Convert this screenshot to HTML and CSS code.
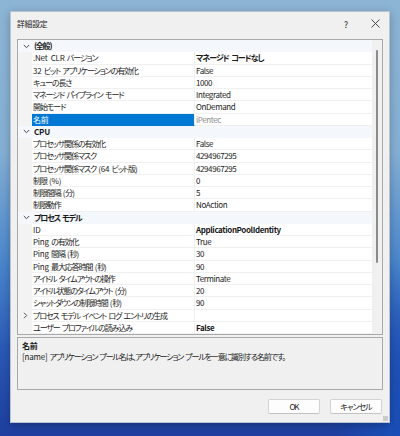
FILE: index.html
```html
<!DOCTYPE html>
<html lang="ja">
<head>
<meta charset="utf-8">
<title>詳細設定</title>
<link rel="stylesheet" href="styles.css">
</head>
<body>
<div class="desktop">
  <div class="window">
    <div class="titlebar">
      <span class="title">詳細設定</span>
      <span class="help">?</span>
      <span class="close"><svg width="9" height="9" viewBox="0 0 9 9"><path d="M0.5 0.5 L8.5 8.5 M8.5 0.5 L0.5 8.5" stroke="#333" stroke-width="0.9" fill="none"/></svg></span>
    </div>
    <div class="grid">
      <div class="rows">
        <div class="row cat"><span class="margin"><svg class="chev" width="7" height="5" viewBox="0 0 7 5"><path d="M0.8 1 L3.5 3.7 L6.2 1" stroke="#444" stroke-width="1" fill="none"/></svg></span><span class="catname">(全般)</span></div>
        <div class="row"><span class="margin"></span><span class="name"><span class="en">.Net CLR</span> バージョン</span><span class="value bold ja">マネージド コードなし</span></div>
        <div class="row"><span class="margin"></span><span class="name"><span class="en">32</span> ビット アプリケーションの有効化</span><span class="value">False</span></div>
        <div class="row"><span class="margin"></span><span class="name">キューの長さ</span><span class="value">1000</span></div>
        <div class="row"><span class="margin"></span><span class="name">マネージド パイプライン モード</span><span class="value">Integrated</span></div>
        <div class="row"><span class="margin"></span><span class="name">開始モード</span><span class="value">OnDemand</span></div>
        <div class="row"><span class="margin"></span><span class="name selected">名前</span><span class="value readonly">iPentec</span></div>
        <div class="row cat"><span class="margin"><svg class="chev" width="7" height="5" viewBox="0 0 7 5"><path d="M0.8 1 L3.5 3.7 L6.2 1" stroke="#444" stroke-width="1" fill="none"/></svg></span><span class="catname en">CPU</span></div>
        <div class="row"><span class="margin"></span><span class="name">プロセッサ関係の有効化</span><span class="value">False</span></div>
        <div class="row"><span class="margin"></span><span class="name">プロセッサ関係マスク</span><span class="value">4294967295</span></div>
        <div class="row"><span class="margin"></span><span class="name">プロセッサ関係マスク <span class="en">(64</span> ビット版)</span><span class="value">4294967295</span></div>
        <div class="row"><span class="margin"></span><span class="name">制限 <span class="en">(%)</span></span><span class="value">0</span></div>
        <div class="row"><span class="margin"></span><span class="name">制限間隔 <span class="en">(</span>分<span class="en">)</span></span><span class="value">5</span></div>
        <div class="row"><span class="margin"></span><span class="name">制限動作</span><span class="value">NoAction</span></div>
        <div class="row cat"><span class="margin"><svg class="chev" width="7" height="5" viewBox="0 0 7 5"><path d="M0.8 1 L3.5 3.7 L6.2 1" stroke="#444" stroke-width="1" fill="none"/></svg></span><span class="catname">プロセス モデル</span></div>
        <div class="row"><span class="margin"></span><span class="name"><span class="en">ID</span></span><span class="value bold">ApplicationPoolIdentity</span></div>
        <div class="row"><span class="margin"></span><span class="name"><span class="en">Ping</span> の有効化</span><span class="value">True</span></div>
        <div class="row"><span class="margin"></span><span class="name"><span class="en">Ping</span> 間隔 <span class="en">(</span>秒<span class="en">)</span></span><span class="value">30</span></div>
        <div class="row"><span class="margin"></span><span class="name"><span class="en">Ping</span> 最大応答時間 <span class="en">(</span>秒<span class="en">)</span></span><span class="value">90</span></div>
        <div class="row"><span class="margin"></span><span class="name">アイドル タイムアウトの操作</span><span class="value">Terminate</span></div>
        <div class="row"><span class="margin"></span><span class="name">アイドル状態のタイムアウト <span class="en">(</span>分<span class="en">)</span></span><span class="value">20</span></div>
        <div class="row"><span class="margin"></span><span class="name">シャットダウンの制限時間 <span class="en">(</span>秒<span class="en">)</span></span><span class="value">90</span></div>
        <div class="row"><span class="margin"><svg class="chev" width="5" height="7" viewBox="0 0 5 7"><path d="M1 0.8 L3.7 3.5 L1 6.2" stroke="#555" stroke-width="1" fill="none"/></svg></span><span class="name">プロセス モデル イベント ログ エントリの生成</span><span class="value"></span></div>
        <div class="row"><span class="margin"></span><span class="name">ユーザー プロファイルの読み込み</span><span class="value bold">False</span></div>
      </div>
      <div class="scroll"><div class="thumb"></div></div>
    </div>
    <div class="desc">
      <div class="desc-title">名前</div>
      <div class="desc-text"><span class="en">[name]</span> アプリケーション プール名は、アプリケーション プールを一意に識別する名前です。</div>
    </div>
    <div class="buttons">
      <button class="btn">OK</button>
      <button class="btn">キャンセル</button>
    </div>
    <div class="grip"></div>
  </div>
</div>
</body>
</html>
```
FILE: styles.css
```css
html, body {
  margin: 0;
  padding: 0;
}
body {
  width: 400px;
  height: 436px;
  overflow: hidden;
  font-family: "Noto Sans CJK JP", "Noto Sans", sans-serif;
  font-size: 8px;
  font-feature-settings: "palt" 1;
  color: #1b1b1b;
}
.desktop {
  width: 400px;
  height: 436px;
  padding-top: 11px;
  padding-left: 10px;
  box-sizing: border-box;
  background:
    radial-gradient(ellipse 60px 160px at 395px 420px, #1a4fb8 0%, rgba(26,79,184,0) 100%),
    linear-gradient(180deg, #8cb4d4 0%, #84afd4 35%, #4a86cc 60%, #2a59b6 80%, #1d3e9e 100%);
}
.window {
  width: 380px;
  height: 412px;
  box-sizing: border-box;
  background: #f0f0f0;
  border: 1px solid #b9c4cf;
  box-shadow: 0 2px 8px rgba(0,0,0,0.25);
  display: flex;
  flex-direction: column;
  position: relative;
}
.titlebar {
  height: 21px;
  display: flex;
  align-items: center;
  padding-left: 6px;
  padding-top: 1px;
}
.title {
  flex: 1;
  font-size: 7.8px;
  letter-spacing: -0.2px;
  color: #1b1b1b;
}
.help {
  font-size: 8.5px;
  width: 10px;
  text-align: center;
  margin-right: 20px;
}
.close {
  display: flex;
  width: 9px;
  margin-right: 9px;
}
.grid {
  margin: 5px 6px 0 6px;
  height: 296px;
  box-sizing: border-box;
  border: 1px solid #a9a9a9;
  background: #f0f0f0;
  display: flex;
  overflow: hidden;
}
.rows {
  width: 354px;
  display: flex;
  flex-direction: column;
}
.row {
  height: 12.25px;
  flex: none;
  display: flex;
  line-height: 12px;
  white-space: nowrap;
}
.margin {
  width: 14px;
  flex: none;
  display: flex;
  align-items: center;
  justify-content: center;
  background: #f3f3f3;
}
.cat {
  background: #f4f7fb;
}
.cat .margin {
  background: #f4f7fb;
  padding-left: 1px;
}
.catname {
  font-weight: bold;
  padding-left: 1px;
  letter-spacing: -1.2px;
  word-spacing: 1.5px;
}
.name {
  width: 163px;
  flex: none;
  padding-left: 1px;
  box-sizing: border-box;
  letter-spacing: -1.1px;
  word-spacing: 1.5px;
  background: #fff;
  border-bottom: 1px solid #f0f0f0;
  border-right: 1px solid #f0f0f0;
  overflow: hidden;
}
.en {
  letter-spacing: -0.2px;
}
.catname.en {
  letter-spacing: -0.2px;
}
.name.selected {
  background: #0078d4;
  color: #fff;
  letter-spacing: -0.3px;
  border-bottom-color: #0078d4;
}
.value {
  flex: 1;
  padding-left: 1px;
  letter-spacing: -0.4px;
  background: #fff;
  border-bottom: 1px solid #f0f0f0;
  overflow: hidden;
}
.value.ja {
  letter-spacing: -1px;
  word-spacing: 1.5px;
}
.bold {
  font-weight: bold;
}
.readonly {
  color: #8a8a8a;
}
.scroll {
  flex: 1;
  display: flex;
  justify-content: center;
  padding-top: 10px;
}
.thumb {
  width: 2px;
  height: 213px;
  border-radius: 1px;
  background: #8b8b8b;
}
.desc {
  margin: 2px 6px 0 6px;
  height: 53px;
  box-sizing: border-box;
  border: 1px solid #a9a9a9;
  padding: 2px 4px;
  background: #f0f0f0;
}
.desc-title {
  font-weight: bold;
  line-height: 11px;
  letter-spacing: -0.2px;
}
.desc-text {
  line-height: 11px;
  letter-spacing: -1.15px;
  word-spacing: 1.5px;
  color: #1b1b1b;
}
.buttons {
  display: flex;
  justify-content: flex-end;
  gap: 10px;
  margin-top: 9px;
  padding-right: 7px;
}
.btn {
  width: 52px;
  height: 15px;
  padding: 0;
  font-family: inherit;
  font-size: 8px;
  font-feature-settings: "palt" 1;
  letter-spacing: -1px;
  color: #1b1b1b;
  background: #fdfdfd;
  border: 1px solid #d3d3d3;
  border-bottom-color: #c3c3c3;
  border-radius: 2px;
}
.grip {
  position: absolute;
  right: 1px;
  bottom: 1px;
  width: 5px;
  height: 5px;
  background-image: radial-gradient(circle, #a0a0a0 0.6px, transparent 0.8px);
  background-size: 2px 2px;
}
```
